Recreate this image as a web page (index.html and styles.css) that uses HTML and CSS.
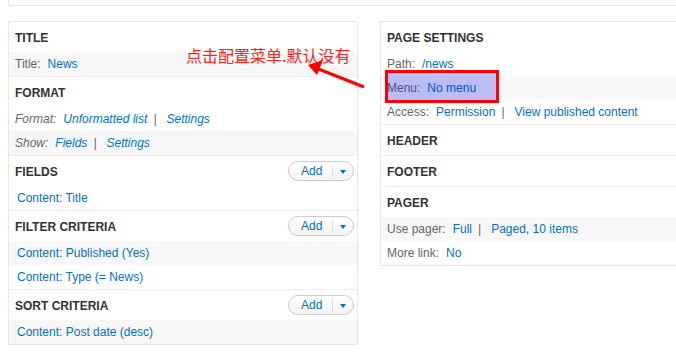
FILE: index.html
```html
<!DOCTYPE html>
<html lang="en">
<head>
    <meta charset="UTF-8">
    <title>View - News</title>
    <link rel="stylesheet" href="styles.css">
</head>
<body>
    <div class="page">
        <div class="top-box"></div>
        <div class="columns">
            <div class="column">
                <div class="section">
                    <div class="section-head"><h3>Title</h3></div>
                    <div class="row gray"><span class="label">Title:</span><a href="#">News</a></div>
                </div>
                <div class="section">
                    <div class="section-head"><h3>Format</h3></div>
                    <div class="row italic"><span class="label">Format:</span><a href="#">Unformatted list</a><span class="sep">|</span><a href="#">Settings</a></div>
                    <div class="row gray italic"><span class="label">Show:</span><a href="#">Fields</a><span class="sep">|</span><a href="#">Settings</a></div>
                </div>
                <div class="section">
                    <div class="section-head">
                        <h3>Fields</h3>
                        <div class="add-btn"><span class="add-text">Add</span><span class="add-arrow"></span></div>
                    </div>
                    <div class="row item"><a href="#">Content: Title</a></div>
                </div>
                <div class="section">
                    <div class="section-head">
                        <h3>Filter criteria</h3>
                        <div class="add-btn"><span class="add-text">Add</span><span class="add-arrow"></span></div>
                    </div>
                    <div class="row item gray"><a href="#">Content: Published (Yes)</a></div>
                    <div class="row item"><a href="#">Content: Type (= News)</a></div>
                </div>
                <div class="section">
                    <div class="section-head">
                        <h3>Sort criteria</h3>
                        <div class="add-btn"><span class="add-text">Add</span><span class="add-arrow"></span></div>
                    </div>
                    <div class="row item gray"><a href="#">Content: Post date (desc)</a></div>
                </div>
            </div>

            <div class="column">
                <div class="section">
                    <div class="section-head"><h3>Page settings</h3></div>
                    <div class="row"><span class="label">Path:</span><a href="#">/news</a></div>
                    <div class="row gray"><span class="label">Menu:</span><a href="#">No menu</a></div>
                    <div class="row"><span class="label">Access:</span><a href="#">Permission</a><span class="sep">|</span><a href="#">View published content</a></div>
                </div>
                <div class="section">
                    <div class="section-head"><h3>Header</h3></div>
                </div>
                <div class="section">
                    <div class="section-head"><h3>Footer</h3></div>
                </div>
                <div class="section">
                    <div class="section-head"><h3>Pager</h3></div>
                    <div class="row gray"><span class="label">Use pager:</span><a href="#">Full</a><span class="sep">|</span><a href="#">Paged, 10 items</a></div>
                    <div class="row"><span class="label">More link:</span><a href="#">No</a></div>
                </div>
            </div>
        </div>

        <!-- annotations drawn over the screenshot -->
        <div class="note">点击配置菜单.默认没有</div>
        <svg class="note-arrow" width="70" height="40" viewBox="0 0 70 40">
            <line x1="64" y1="32" x2="16" y2="13" stroke="#f00" stroke-width="3"/>
            <polygon points="8,10 23,5 17,20" fill="#f00"/>
        </svg>
        <div class="highlight"></div>
    </div>
</body>
</html>
```

FILE: styles.css
```css
body {
    margin: 0;
    font-family: 'Liberation Sans', Arial, sans-serif;
    font-size: 12px;
    color: #666;
    background-color: #fff;
    overflow: hidden;
}
.page {
    position: relative;
    width: 740px;
    padding-left: 8px;
}
.top-box {
    width: 722px;
    height: 5px;
    border-left: 1px solid #e8e8e8;
    border-bottom: 1px solid #e8e8e8;
    box-sizing: content-box;
}
.columns {
    display: flex;
    gap: 22px;
    margin-top: 15px;
}
.column {
    width: 350px;
    border: 1px solid #e8e8e8;
    box-sizing: border-box;
    align-self: flex-start;
}
.section {
    border-bottom: 1px solid #eee;
}
.section:last-child {
    border-bottom: none;
}
.section-head {
    height: 30px;
    display: flex;
    align-items: center;
    justify-content: space-between;
    padding: 1px 3px 0 6px;
    box-sizing: border-box;
}
.section-head h3 {
    margin: 0;
    font-size: 12px;
    font-weight: bold;
    text-transform: uppercase;
    color: #333;
}
.row {
    height: 24px;
    line-height: 24px;
    padding-left: 6px;
    white-space: nowrap;
}
.row.gray {
    background-color: #f7f7f7;
}
.row.item {
    padding-left: 8px;
}
.row.italic {
    font-style: italic;
}
.label {
    margin-right: 7px;
}
.row a {
    color: #0074bd;
    text-decoration: none;
}
.sep {
    margin: 0 10px 0 6px;
}
.add-btn {
    display: flex;
    align-items: center;
    height: 20px;
    width: 66px;
    border: 1px solid #ccc;
    border-radius: 10px;
    background: linear-gradient(#fff, #f3f3f3);
    box-sizing: border-box;
    margin-top: -2px;
}
.add-text {
    color: #0074bd;
    padding-left: 12px;
    padding-right: 10px;
    border-right: 1px solid #ddd;
    line-height: 12px;
}
.add-arrow {
    width: 0;
    height: 0;
    margin-left: 7px;
    margin-top: 3px;
    border-left: 3.5px solid transparent;
    border-right: 3.5px solid transparent;
    border-top: 4px solid #0074bd;
}
.note {
    position: absolute;
    left: 186px;
    top: 47px;
    font-family: 'Noto Sans CJK SC', sans-serif;
    font-size: 16px;
    line-height: 16px;
    color: #f22;
    white-space: nowrap;
}
.note-arrow {
    position: absolute;
    left: 300px;
    top: 55px;
}
.highlight {
    position: absolute;
    left: 385px;
    top: 70px;
    width: 114px;
    height: 33px;
    border: 3px solid #f00;
    box-sizing: border-box;
    background-color: rgba(0, 0, 240, 0.24);
}
```
